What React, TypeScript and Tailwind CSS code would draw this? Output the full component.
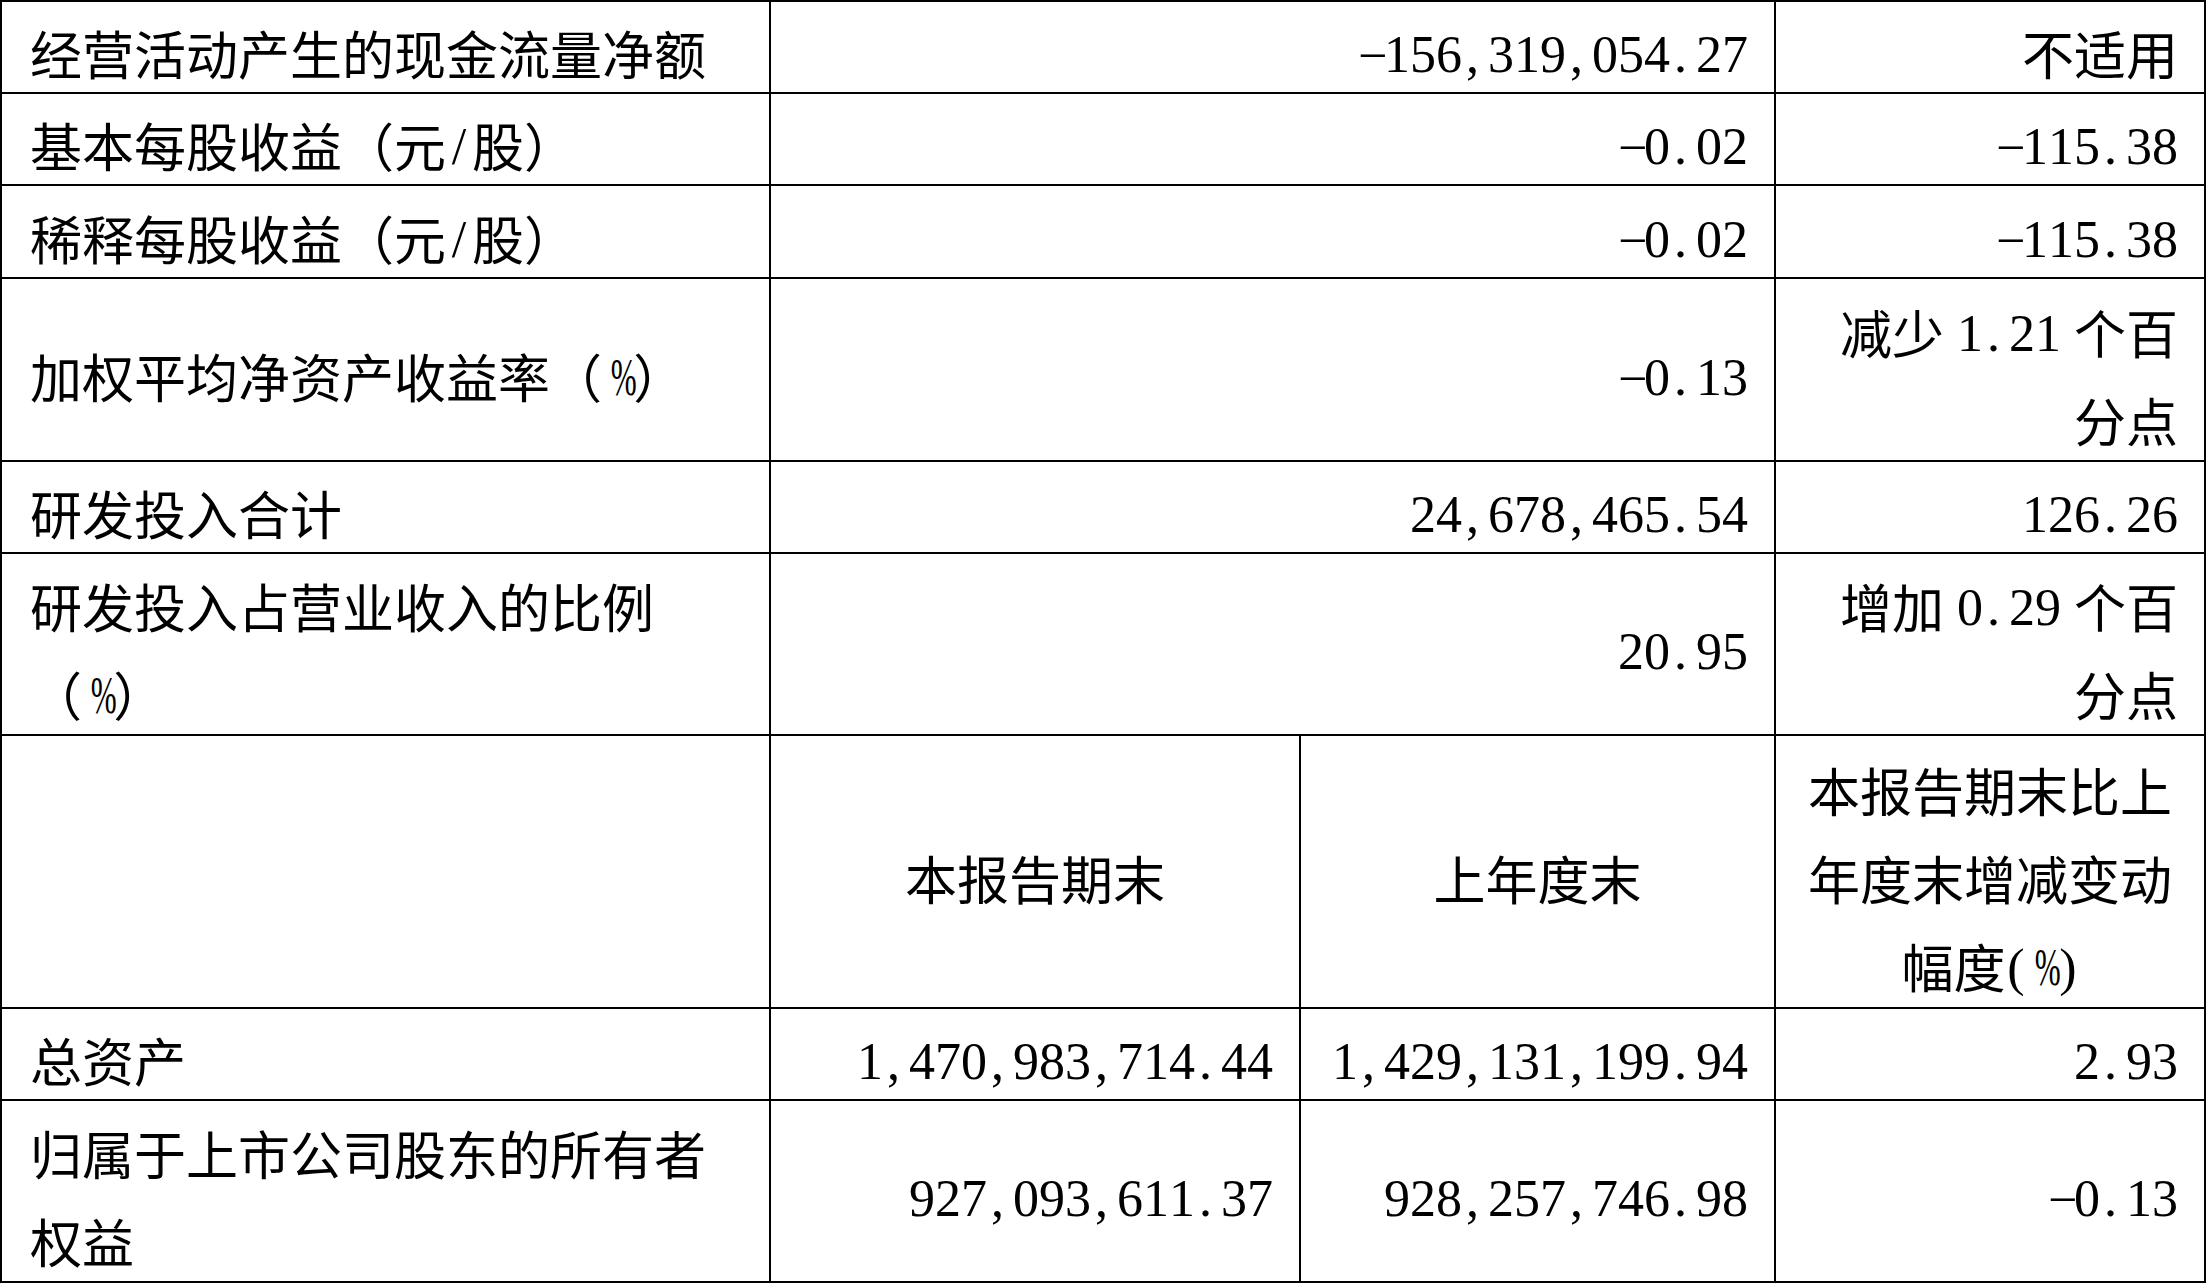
import React from "react";

const isHalf = (c: string) => c.charCodeAt(0) < 128;

function Half({ c }: { c: string }) {
  if (c === "-")
    return (
      <span className="inline-block w-[0.5em] text-center leading-none font-['Liberation_Serif'] align-[2px]">
        −
      </span>
    );
  if (c === "," || c === ".")
    return (
      <span className="inline-block w-[0.5em] text-left pl-[4px] leading-none font-['Liberation_Serif'] align-[3px]">
        {c}
      </span>
    );
  if (c === "%")
    return (
      <span className="inline-block w-[0.6em] text-center leading-none font-['Liberation_Serif'] align-[3px]">
        <span className="inline-block scale-x-60">%</span>
      </span>
    );
  if (c === "(" || c === ")")
    return (
      <span className="inline-block w-[0.4em] text-center leading-none font-['Liberation_Serif'] align-[3px]">
        {c}
      </span>
    );
  if (c === " ") return <span className="inline-block w-[0.25em]">&nbsp;</span>;
  return (
    <span className="inline-block w-[0.5em] text-center leading-none font-['Liberation_Serif'] align-[3px]">
      {c}
    </span>
  );
}

function T({ s }: { s: string }) {
  const out: React.ReactNode[] = [];
  let buf = "";
  s.split("").forEach((c, i) => {
    if (isHalf(c)) {
      if (buf) {
        out.push(<span key={"b" + i}>{buf}</span>);
        buf = "";
      }
      out.push(<Half key={i} c={c} />);
    } else buf += c;
  });
  if (buf) out.push(<span key="end">{buf}</span>);
  return <>{out}</>;
}

function Lines({ lines, align }: { lines: string[]; align: "left" | "right" | "center" }) {
  const cls = align === "left" ? "text-left" : align === "right" ? "text-right" : "text-center";
  return (
    <div className={cls}>
      {lines.map((l, i) => (
        <div key={i} className="whitespace-nowrap">
          <T s={l} />
        </div>
      ))}
    </div>
  );
}

const cellBase = "bg-white flex items-center pt-[12px] overflow-visible";
const leftCell = cellBase + " justify-start pl-[28px]";
const rightCell = cellBase + " justify-end pr-[26px]";
const centerCell = cellBase + " justify-center";

export default function App() {
  return (
    <div className="w-[2207px] h-[1284px] bg-white">
      <div className="w-[2206px] bg-black p-[2px] gap-[2px] grid grid-cols-[767px_528px_473px_428px] grid-rows-[90px_90px_91px_181px_90px_180px_271px_90px_180px] text-[52px] leading-[88px] text-black font-['Noto_Sans_CJK_SC',sans-serif]">
        {/* row 1 */}
        <div className={leftCell}><Lines lines={["经营活动产生的现金流量净额"]} align="left" /></div>
        <div className={rightCell + " col-span-2"}><Lines lines={["-156,319,054.27"]} align="right" /></div>
        <div className={rightCell}><Lines lines={["不适用"]} align="right" /></div>
        {/* row 2 */}
        <div className={leftCell}><Lines lines={["基本每股收益（元/股）"]} align="left" /></div>
        <div className={rightCell + " col-span-2"}><Lines lines={["-0.02"]} align="right" /></div>
        <div className={rightCell}><Lines lines={["-115.38"]} align="right" /></div>
        {/* row 3 */}
        <div className={leftCell}><Lines lines={["稀释每股收益（元/股）"]} align="left" /></div>
        <div className={rightCell + " col-span-2"}><Lines lines={["-0.02"]} align="right" /></div>
        <div className={rightCell}><Lines lines={["-115.38"]} align="right" /></div>
        {/* row 4 */}
        <div className={leftCell}><Lines lines={["加权平均净资产收益率（%）"]} align="left" /></div>
        <div className={rightCell + " col-span-2"}><Lines lines={["-0.13"]} align="right" /></div>
        <div className={rightCell}><Lines lines={["减少 1.21 个百", "分点"]} align="right" /></div>
        {/* row 5 */}
        <div className={leftCell}><Lines lines={["研发投入合计"]} align="left" /></div>
        <div className={rightCell + " col-span-2"}><Lines lines={["24,678,465.54"]} align="right" /></div>
        <div className={rightCell}><Lines lines={["126.26"]} align="right" /></div>
        {/* row 6 */}
        <div className={leftCell}><Lines lines={["研发投入占营业收入的比例", "（%）"]} align="left" /></div>
        <div className={rightCell + " col-span-2"}><Lines lines={["20.95"]} align="right" /></div>
        <div className={rightCell}><Lines lines={["增加 0.29 个百", "分点"]} align="right" /></div>
        {/* row 7 header */}
        <div className={leftCell}></div>
        <div className={centerCell}><Lines lines={["本报告期末"]} align="center" /></div>
        <div className={centerCell}><Lines lines={["上年度末"]} align="center" /></div>
        <div className={centerCell}><Lines lines={["本报告期末比上", "年度末增减变动", "幅度(%)"]} align="center" /></div>
        {/* row 8 */}
        <div className={leftCell}><Lines lines={["总资产"]} align="left" /></div>
        <div className={rightCell}><Lines lines={["1,470,983,714.44"]} align="right" /></div>
        <div className={rightCell}><Lines lines={["1,429,131,199.94"]} align="right" /></div>
        <div className={rightCell}><Lines lines={["2.93"]} align="right" /></div>
        {/* row 9 */}
        <div className={leftCell}><Lines lines={["归属于上市公司股东的所有者", "权益"]} align="left" /></div>
        <div className={rightCell}><Lines lines={["927,093,611.37"]} align="right" /></div>
        <div className={rightCell}><Lines lines={["928,257,746.98"]} align="right" /></div>
        <div className={rightCell}><Lines lines={["-0.13"]} align="right" /></div>
      </div>
    </div>
  );
}
